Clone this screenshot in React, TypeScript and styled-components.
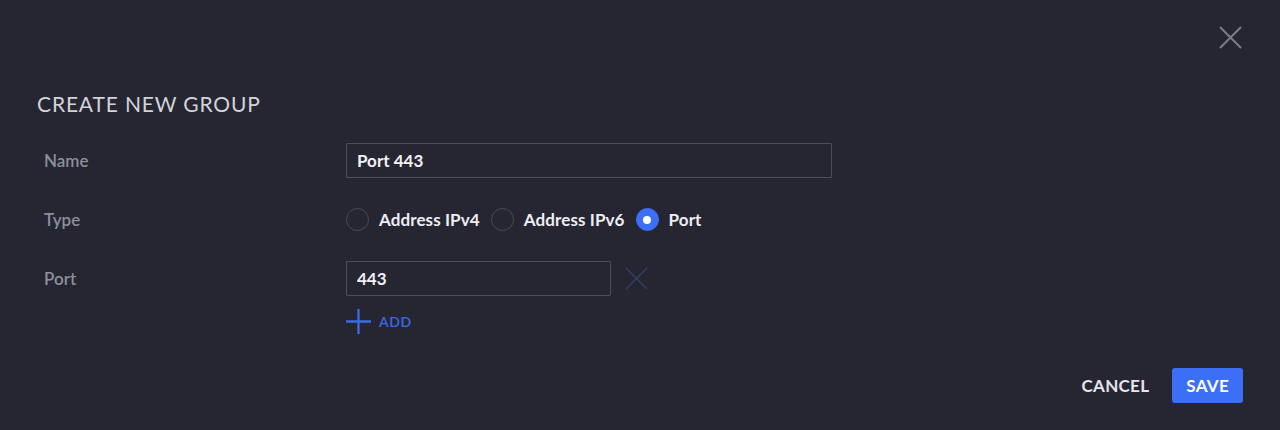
import styled, { createGlobalStyle } from "styled-components";

const GlobalStyle = createGlobalStyle`
    html, body {
        margin: 0;
        padding: 0;
        background-color: #252632;
    }
    * {
        box-sizing: border-box;
    }
`;

const Dialog = styled.div`
    width: 1280px;
    height: 430px;
    background-color: #252632;
    font-family: Lato, "Open Sans", sans-serif;
    display: flex;
    flex-direction: column;
    padding: 25px 37px 27px 37px;
`;

const TopBar = styled.div`
    display: flex;
    justify-content: flex-end;
    height: 25px;
`;

const CloseButton = styled.button`
    background: none;
    border: none;
    padding: 0;
    width: 25px;
    height: 25px;
    cursor: pointer;
    display: flex;
    align-items: center;
    justify-content: center;
`;

const Title = styled.h2`
    margin: 43px 0 0 0;
    font-size: 21px;
    font-weight: 400;
    letter-spacing: 0.85px;
    color: #d3d4da;
    line-height: 22px;
`;

const Form = styled.div`
    margin-top: 28px;
    padding-left: 7px;
    display: flex;
    flex-direction: column;
    gap: 24px;
`;

const Row = styled.div`
    display: grid;
    grid-template-columns: 302px 1fr;
    align-items: start;
`;

const Label = styled.div`
    height: 35px;
    display: flex;
    align-items: center;
    font-size: 17px;
    font-weight: 600;
    color: #8d8f9b;
`;

const Field = styled.div`
    display: flex;
    flex-direction: column;
    align-items: flex-start;
`;

const InputLine = styled.div`
    display: flex;
    align-items: center;
    gap: 13px;
`;

const TextInput = styled.input<{ $width: number }>`
    width: ${p => p.$width}px;
    height: 35px;
    background: transparent;
    border: 1px solid #4b4e5b;
    border-radius: 1px;
    padding: 0 10px;
    font-family: Lato, "Open Sans", sans-serif;
    font-size: 17px;
    font-weight: 700;
    color: #f1f1f4;
    outline: none;
`;

const RemoveButton = styled.button`
    background: none;
    border: none;
    padding: 0;
    width: 25px;
    height: 25px;
    display: flex;
    align-items: center;
    justify-content: center;
`;

const RadioGroup = styled.div`
    height: 35px;
    display: flex;
    align-items: center;
    gap: 11px;
`;

const RadioOption = styled.label`
    display: flex;
    align-items: center;
    gap: 10px;
    font-size: 17px;
    font-weight: 700;
    letter-spacing: 0.1px;
    color: #eeeef2;
    cursor: pointer;
`;

const RadioCircle = styled.span<{ $checked: boolean }>`
    width: 23px;
    height: 23px;
    border-radius: 50%;
    border: 1px solid ${p => (p.$checked ? "#3b6ff5" : "#474a57")};
    background-color: ${p => (p.$checked ? "#3b6ff5" : "transparent")};
    display: flex;
    align-items: center;
    justify-content: center;

    &::after {
        content: "";
        width: 8px;
        height: 8px;
        border-radius: 50%;
        background-color: #fff;
        display: ${p => (p.$checked ? "block" : "none")};
    }
`;

const AddButton = styled.button`
    margin-top: 13px;
    background: none;
    border: none;
    padding: 0;
    display: flex;
    align-items: center;
    gap: 8px;
    font-family: Lato, "Open Sans", sans-serif;
    font-size: 14px;
    font-weight: 600;
    letter-spacing: 0.6px;
    color: #3d6ae6;
    cursor: pointer;
`;

const Footer = styled.div`
    margin-top: auto;
    display: flex;
    justify-content: flex-end;
    align-items: center;
    gap: 23px;
`;

const FooterButton = styled.button<{ $primary?: boolean }>`
    height: 35px;
    padding: 0 ${p => (p.$primary ? "14px" : "0")};
    border: none;
    border-radius: 3px;
    background-color: ${p => (p.$primary ? "#3b6ff6" : "transparent")};
    color: ${p => (p.$primary ? "#ffffff" : "#e6e6ea")};
    font-family: Lato, "Open Sans", sans-serif;
    font-size: 17px;
    font-weight: 700;
    letter-spacing: 0.3px;
    cursor: pointer;
`;

const Cross = ({ size, color, width }: { size: number; color: string; width: number }) => (
    <svg width={size} height={size} viewBox="0 0 24 24" fill="none">
        <path d="M1 1L23 23M23 1L1 23" stroke={color} strokeWidth={width} />
    </svg>
);

function App() {
    const types = ["Address IPv4", "Address IPv6", "Port"];

    return (
        <>
            <GlobalStyle />
            <Dialog>
                <TopBar>
                    <CloseButton>
                        <Cross size={23} color="#7b7d89" width={2} />
                    </CloseButton>
                </TopBar>
                <Title>CREATE NEW GROUP</Title>
                <Form>
                    <Row>
                        <Label>Name</Label>
                        <Field>
                            <TextInput $width={486} defaultValue="Port 443" />
                        </Field>
                    </Row>
                    <Row>
                        <Label>Type</Label>
                        <RadioGroup>
                            {types.map(type => (
                                <RadioOption key={type}>
                                    <RadioCircle $checked={type === "Port"} />
                                    {type}
                                </RadioOption>
                            ))}
                        </RadioGroup>
                    </Row>
                    <Row>
                        <Label>Port</Label>
                        <Field>
                            <InputLine>
                                <TextInput $width={265} defaultValue="443" />
                                <RemoveButton>
                                    <Cross size={23} color="#343d66" width={1.6} />
                                </RemoveButton>
                            </InputLine>
                            <AddButton>
                                <svg width="25" height="25" viewBox="0 0 24 24" fill="none">
                                    <path d="M12 0V24M0 12H24" stroke="#3d6ae6" strokeWidth="2.2" />
                                </svg>
                                ADD
                            </AddButton>
                        </Field>
                    </Row>
                </Form>
                <Footer>
                    <FooterButton>CANCEL</FooterButton>
                    <FooterButton $primary>SAVE</FooterButton>
                </Footer>
            </Dialog>
        </>
    );
}

export default App;
